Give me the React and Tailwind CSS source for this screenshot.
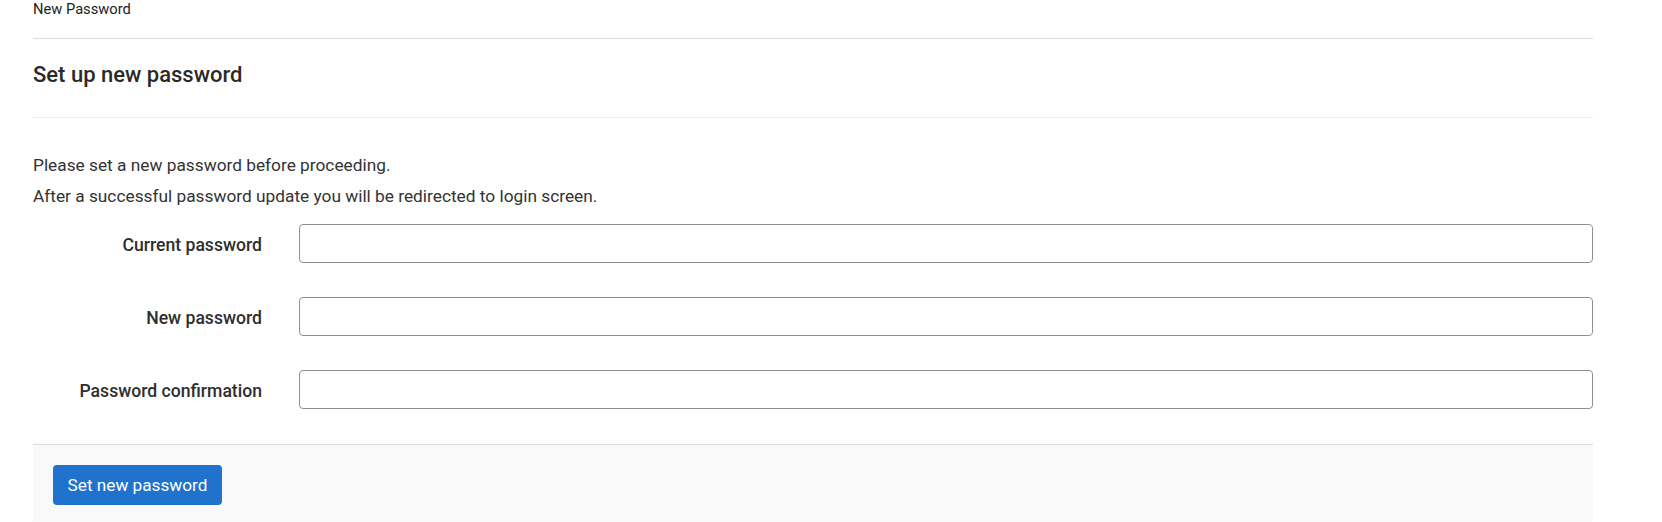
export default function App() {
  const fields = ["Current password", "New password", "Password confirmation"];

  return (
    <div
      className="min-h-[522px] bg-white text-[#333]"
      style={{ fontFamily: 'Roboto, "Open Sans", sans-serif' }}
    >
      <div className="ml-[33px] w-[1560px]">
        {/* page title strip */}
        <div className="h-[39px] border-b border-[#dcdcdc] text-[14.7px] leading-[18px] text-[#222]">
          New Password
        </div>

        <div className="h-[79px] border-b border-[#ededed] pt-[22px]">
          <h1 className="text-[22px] leading-[28px] font-medium text-[#2a2a2a]">Set up new password</h1>
        </div>

        <div className="pt-[35px]">
          <p className="text-[17.3px] leading-[24px]">Please set a new password before proceeding.</p>
          <p className="mt-[7px] text-[17.3px] leading-[24px]">
            After a successful password update you will be redirected to login screen.
          </p>

          <div className="mt-[16px] flex flex-col gap-[34px] pb-[35px]">
            {fields.map((f) => (
              <div key={f} className="flex items-center">
                <label className="w-[229px] pt-[4px] text-right text-[17.6px] font-medium text-[#2e2e2e]">{f}</label>
                <input
                  type="password"
                  className="ml-[37px] h-[39px] flex-1 rounded-[4px] border border-[#8f8f8f] bg-white px-3 outline-none"
                />
              </div>
            ))}
          </div>
        </div>

        <div className="h-[77px] border-t border-[#dddddd] bg-[#f9f9f9] pl-[20px] pt-[20px]">
          <button className="h-[40px] w-[169px] rounded-[4px] bg-[#1f73cc] pt-[2px] text-[17.2px] text-white">
            Set new password
          </button>
        </div>
      </div>
    </div>
  );
}
